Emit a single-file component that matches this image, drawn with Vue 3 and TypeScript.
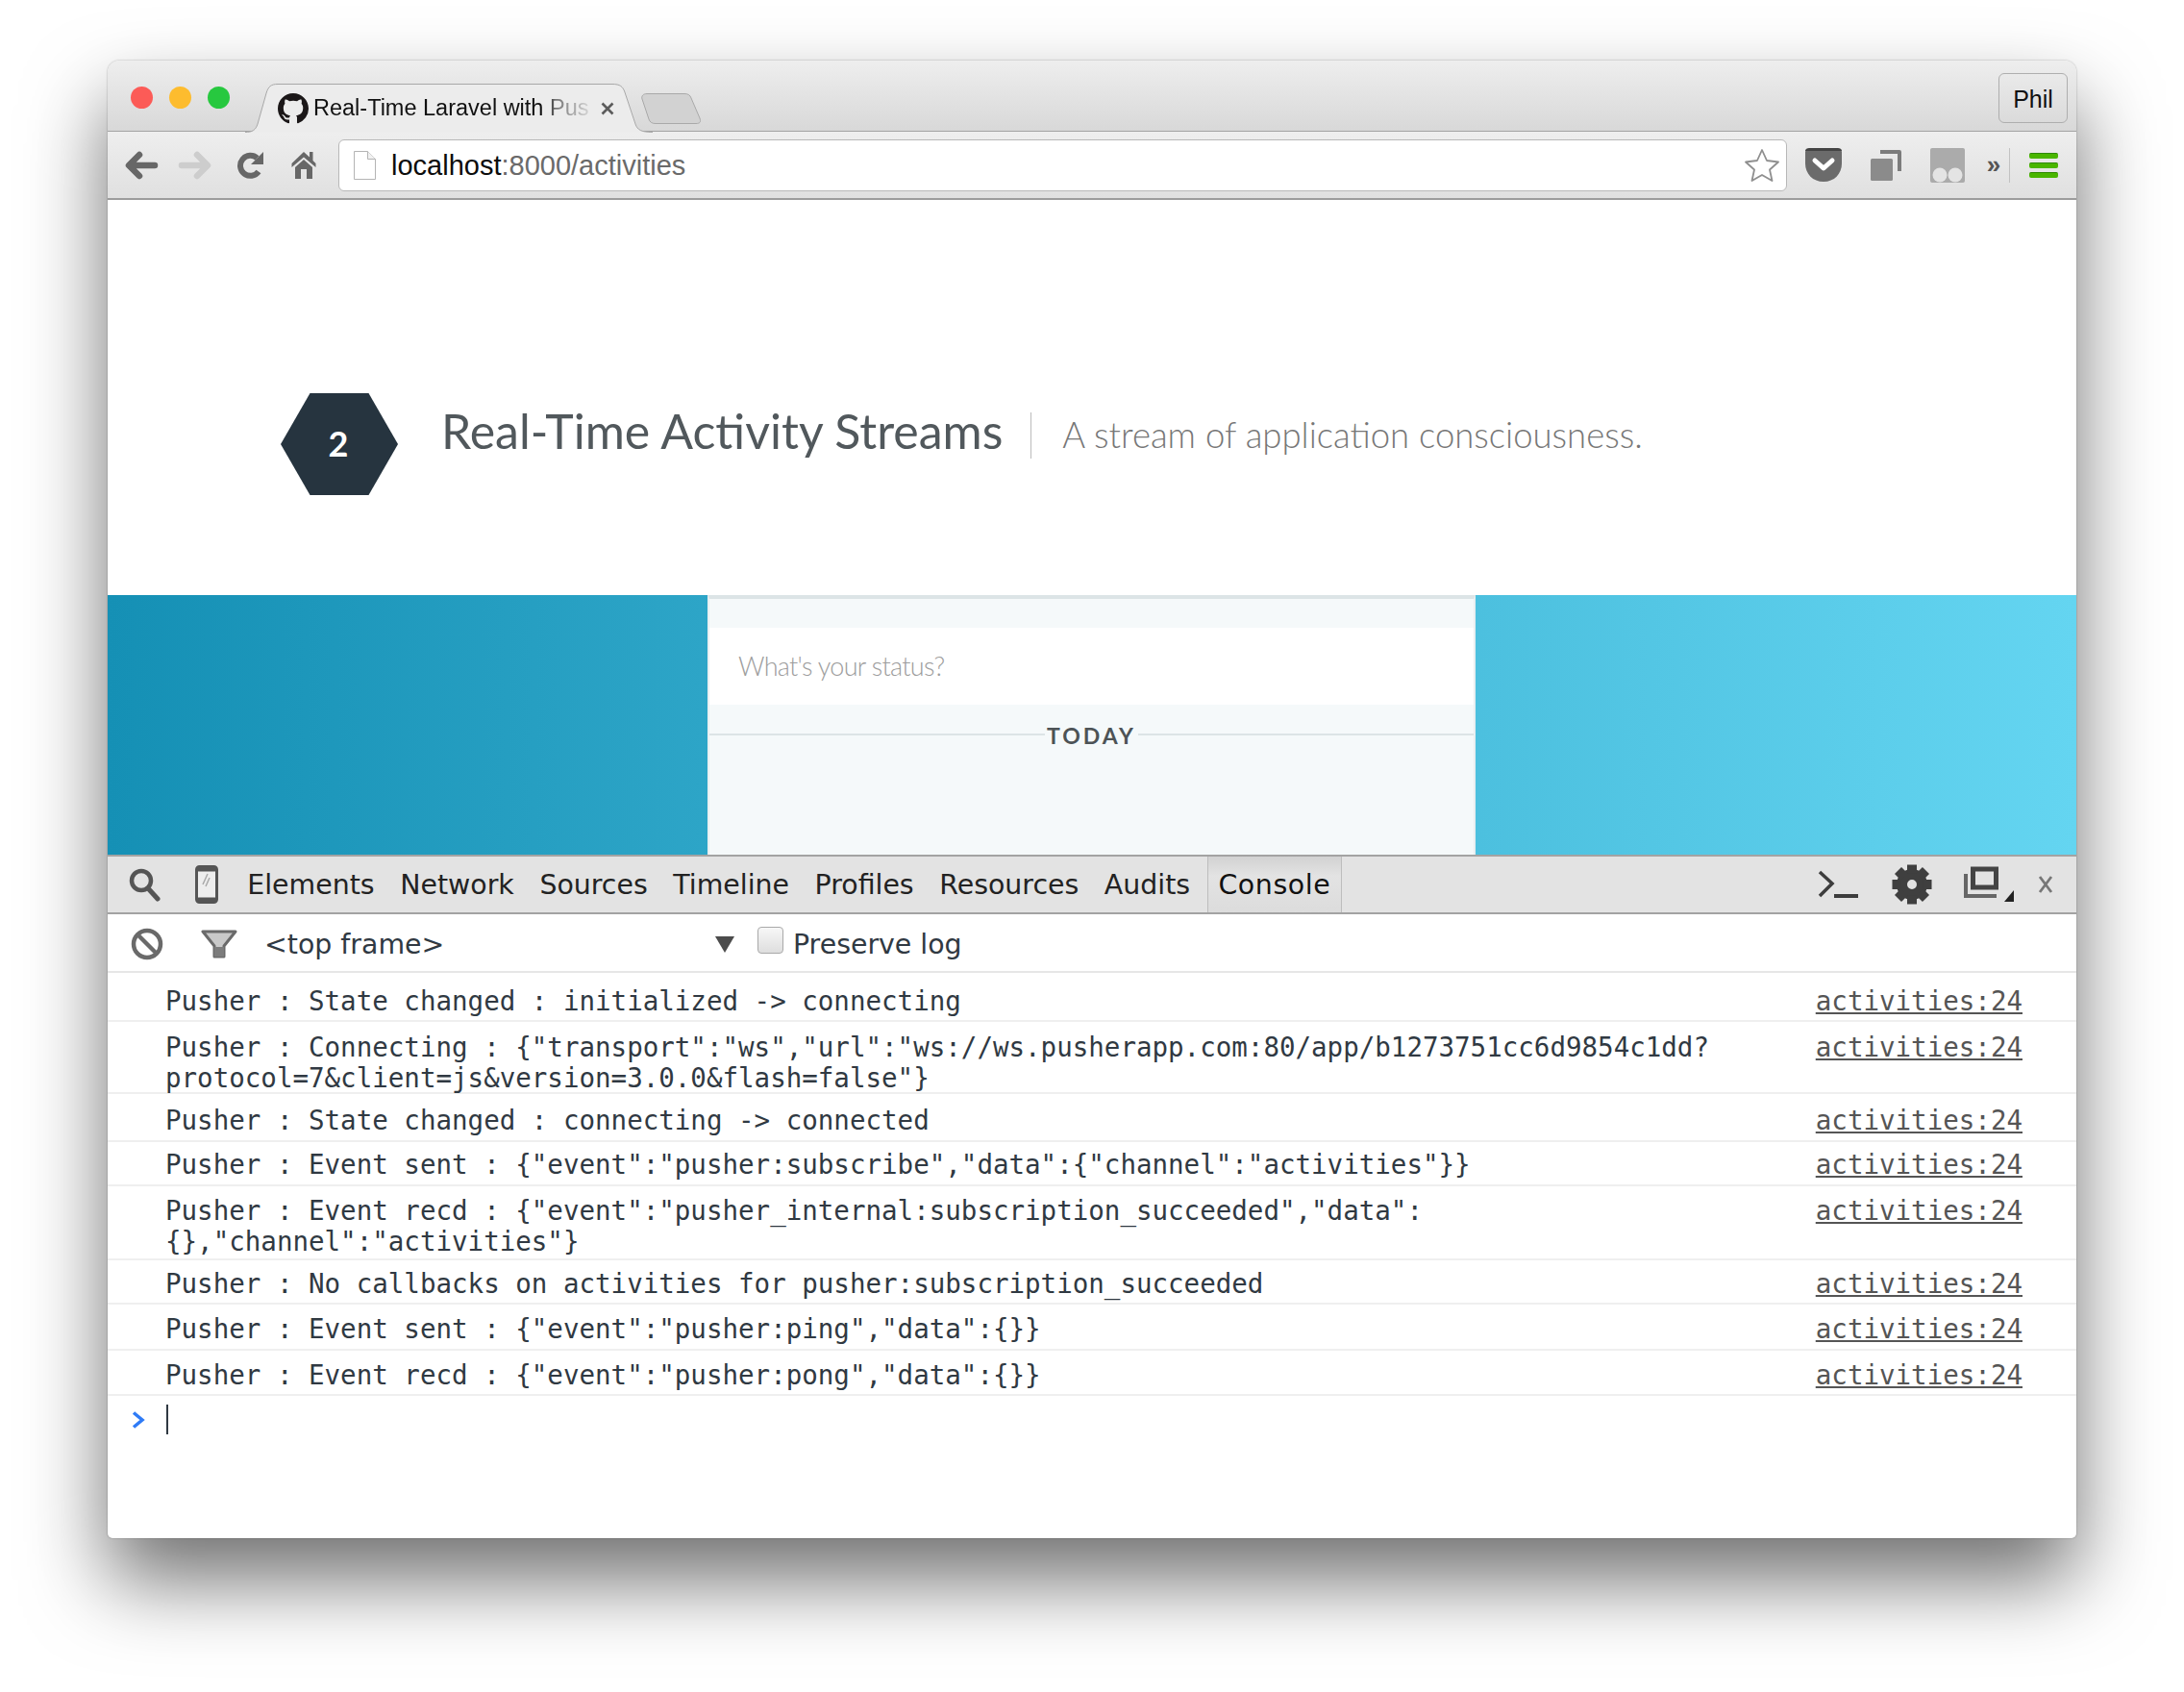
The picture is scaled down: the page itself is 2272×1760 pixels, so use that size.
<script setup lang="ts">
const tabs: string[] = ['Elements', 'Network', 'Sources', 'Timeline', 'Profiles', 'Resources', 'Audits', 'Console']
interface Row { lines: string[]; height: number; top: number }
const rows: Row[] = [
  { lines: ['Pusher : State changed : initialized -> connecting'], height: 51, top: 13 },
  { lines: ['Pusher : Connecting : {"transport":"ws","url":"ws://ws.pusherapp.com:80/app/b1273751cc6d9854c1dd?', 'protocol=7&client=js&version=3.0.0&flash=false"}'], height: 75, top: 10 },
  { lines: ['Pusher : State changed : connecting -> connected'], height: 50, top: 11 },
  { lines: ['Pusher : Event sent : {"event":"pusher:subscribe","data":{"channel":"activities"}}'], height: 46, top: 7 },
  { lines: ['Pusher : Event recd : {"event":"pusher_internal:subscription_succeeded","data":', '{},"channel":"activities"}'], height: 77, top: 9 },
  { lines: ['Pusher : No callbacks on activities for pusher:subscription_succeeded'], height: 46, top: 8 },
  { lines: ['Pusher : Event sent : {"event":"pusher:ping","data":{}}'], height: 48, top: 9 },
  { lines: ['Pusher : Event recd : {"event":"pusher:pong","data":{}}'], height: 47, top: 9 },
]
const teeth: number[] = [0, 45, 90, 135, 180, 225, 270, 315]
</script>

<template>
  <div class="screen">
    <div class="window">
      <header class="strip">
        <div class="lights">
          <span class="light red"></span>
          <span class="light amber"></span>
          <span class="light green"></span>
        </div>
        <div class="tab">
          <svg class="tab-shape" width="424" height="51" viewBox="0 0 424 51">
            <path d="M0 50.5 C8 50.5 11 48 13 42 L22 10 C24 3 27 .5 34 .5 H382 C390 .5 393 3 395 9 L406 42 C408 48 412 50.5 424 50.5" fill="#ececec" stroke="#a8a8a8" />
          </svg>
          <svg class="octo" width="32" height="32" viewBox="0 0 16 16">
            <path fill="#1b1718" d="M8 0C3.58 0 0 3.58 0 8c0 3.54 2.29 6.53 5.47 7.59.4.07.55-.17.55-.38 0-.19-.01-.82-.01-1.49-2.01.37-2.53-.49-2.69-.94-.09-.23-.48-.94-.82-1.13-.28-.15-.68-.52-.01-.53.63-.01 1.08.58 1.23.82.72 1.21 1.87.87 2.33.66.07-.52.28-.87.51-1.07-1.78-.2-3.64-.89-3.64-3.95 0-.87.31-1.59.82-2.15-.08-.2-.36-1.02.08-2.12 0 0 .67-.21 2.2.82.64-.18 1.32-.27 2-.27.68 0 1.36.09 2 .27 1.53-1.04 2.2-.82 2.2-.82.44 1.1.16 1.92.08 2.12.51.56.82 1.27.82 2.15 0 3.07-1.87 3.75-3.65 3.95.29.25.54.73.54 1.48 0 1.07-.01 1.93-.01 2.2 0 .21.15.46.55.38A8.013 8.013 0 0016 8c0-4.42-3.58-8-8-8z" />
          </svg>
          <span class="tab-title">Real-Time Laravel with Pus</span>
          <svg class="tab-close" width="14" height="14" viewBox="0 0 14 14">
            <path d="M1.5 1.5 L12.5 12.5 M12.5 1.5 L1.5 12.5" stroke="#5c5c5c" stroke-width="2.6" />
          </svg>
        </div>
        <svg class="newtab" width="64" height="32" viewBox="0 0 64 32">
          <path d="M7 .5 H46 C50 .5 52 2 53 5 L62 26 C63.5 30 62 31.5 58 31.5 H16 C12 31.5 10 30 9 27 L2 6 C1 3 3 .5 7 .5 Z" fill="#d2d2d2" stroke="#a9a9a9" />
        </svg>
        <div class="profile">Phil</div>
      </header>

      <div class="toolbar">
        <svg class="ic back" width="36" height="36" viewBox="0 0 36 36">
          <path d="M32 18 H8 M16 7 L5 18 L16 29" fill="none" stroke="#676767" stroke-width="6.5" stroke-linecap="round" stroke-linejoin="round" />
        </svg>
        <svg class="ic fwd" width="36" height="36" viewBox="0 0 36 36">
          <path d="M4 18 H28 M20 7 L31 18 L20 29" fill="none" stroke="#cdcdcd" stroke-width="6.5" stroke-linecap="round" stroke-linejoin="round" />
        </svg>
        <svg class="ic reload" width="36" height="36" viewBox="0 0 36 36">
          <path d="M24.500 10.500 A10.500 10.500 0 1 0 26 24.500" fill="none" stroke="#676767" stroke-width="6" />
          <path d="M31 4 V17 H18 Z" fill="#676767" />
        </svg>
        <svg class="ic home" width="36" height="36" viewBox="0 0 36 36">
          <path d="M18 4 L24 9.500 V4 H27.500 V13 L30.500 16 V20 L18 9.500 L5.500 20 V16 Z M9 20 L18 12 L27 20 V32 H21 V22 H15 V32 H9 Z" fill="#676767" />
        </svg>
        <div class="address">
          <svg class="page-ic" width="23" height="30" viewBox="0 0 23 30">
            <path d="M.5 .5 H14.500 L22.500 8.500 V29.500 H.5 Z" fill="#fff" stroke="#b4b4b4" />
            <path d="M14.500 .5 V8.500 H22.500" fill="#f1f1f1" stroke="#b4b4b4" />
          </svg>
          <span class="url"><span class="host">localhost</span>:8000/activities</span>
          <svg class="star" width="38" height="36" viewBox="0 0 38 36">
            <path d="M19 2 L24 13 L36 14.500 L27 22.500 L29.500 34 L19 28 L8.500 34 L11 22.500 L2 14.500 L14 13 Z" fill="#fff" stroke="#8f8f8f" stroke-width="1.800" stroke-linejoin="round" />
          </svg>
        </div>
        <svg class="ic pocket" width="38" height="36" viewBox="0 0 38 36">
          <path d="M0 4 C0 2 2 1 4 1 H34 C36 1 38 2 38 4 V16 C38 27 30 35 19 35 C8 35 0 27 0 16 Z" fill="#6b6b6b" />
          <path d="M0 3 C0 1 2 0 4 0 H34 C36 0 38 1 38 3 Z" fill="#444" />
          <path d="M10 13 L19 21 L28 13" fill="none" stroke="#fff" stroke-width="5" stroke-linecap="round" stroke-linejoin="round" />
        </svg>
        <svg class="ic copy" width="32" height="32" viewBox="0 0 32 32">
          <path d="M10 2 H30 V22" fill="none" stroke="#7c7c7c" stroke-width="4" stroke-linejoin="round" />
          <rect x="0" y="9" width="23" height="23" rx="1.500" fill="#8b8b8b" />
        </svg>
        <svg class="ic ghost" width="38" height="38" viewBox="0 0 38 38">
          <rect x="1" y="1" width="36" height="36" rx="2" fill="#ababab" />
          <circle cx="11" cy="29" r="7.500" fill="#e4e4e4" />
          <circle cx="27" cy="29" r="7.500" fill="#e4e4e4" />
        </svg>
        <span class="chevrons">»</span>
        <span class="sep"></span>
        <div class="menu">
          <span></span><span></span><span></span>
        </div>
      </div>

      <main class="page">
        <section class="hero">
          <div class="hex">2</div>
          <h1 class="title">Real-Time Activity Streams</h1>
          <span class="divider"></span>
          <p class="tagline">A stream of application consciousness.</p>
        </section>
        <section class="band">
          <div class="panel">
            <div class="status">What's your status?</div>
            <div class="today">
              <span class="rule"></span>
              <span class="today-label">TODAY</span>
              <span class="rule"></span>
            </div>
          </div>
        </section>
      </main>

      <section class="devtools">
        <nav class="dt-tabs">
          <svg class="search" width="34" height="36" viewBox="0 0 34 36">
            <circle cx="14" cy="14" r="10" fill="none" stroke="#555" stroke-width="4.500" />
            <path d="M21 22 L31 33" stroke="#555" stroke-width="5" stroke-linecap="round" />
          </svg>
          <svg class="device" width="24" height="40" viewBox="0 0 24 40">
            <rect x="1.500" y="1.500" width="21" height="37" rx="3" fill="#eee" stroke="#555" stroke-width="3" />
            <rect x="1.500" y="1.500" width="21" height="5" rx="2" fill="#555" />
            <rect x="1.500" y="33.500" width="21" height="5" rx="2" fill="#555" />
            <path d="M8 20 L13 9 M11 22 L15 13" stroke="#aaa" stroke-width="1.500" />
          </svg>
          <span v-for="t in tabs" :key="t" class="dt-tab" :class="{ active: t === 'Console' }">{{ t }}</span>
          <span class="spacer"></span>
          <svg class="drawer" width="42" height="30" viewBox="0 0 42 30">
            <path d="M2 2 L15 14 L2 27" fill="none" stroke="#3d3d3d" stroke-width="3.500" />
            <rect x="17" y="25" width="25" height="4" fill="#3d3d3d" />
          </svg>
          <svg class="gear" width="42" height="42" viewBox="-21 -21 42 42">
            <circle r="10.500" fill="none" stroke="#3f3f3f" stroke-width="11" />
            <rect v-for="a in teeth" :key="a" x="-5" y="-20.500" width="10" height="9" fill="#3f3f3f" :transform="`rotate(${a})`" />
          </svg>
          <svg class="dock" width="58" height="38" viewBox="0 0 58 38">
            <rect x="9.500" y="3" width="24" height="19" fill="none" stroke="#444" stroke-width="5" />
            <path d="M2 8 V31 H34" fill="none" stroke="#666" stroke-width="4" />
            <path d="M52 25 V37 H42 Z" fill="#222" />
          </svg>
          <svg class="dt-close" width="18" height="22" viewBox="0 0 18 22">
            <path d="M3 3 L15 19 M15 3 L3 19" stroke="#777" stroke-width="2.800" />
          </svg>
        </nav>
        <div class="filter">
          <svg class="block" width="34" height="34" viewBox="0 0 34 34">
            <circle cx="17" cy="17" r="14" fill="none" stroke="#6a6a6a" stroke-width="4.500" />
            <path d="M7 7 L27 27" stroke="#6a6a6a" stroke-width="4.500" />
          </svg>
          <svg class="funnel" width="38" height="30" viewBox="0 0 38 30">
            <path d="M2 2 H36 L24 17 V28 H14 V17 Z" fill="#c9c9c9" stroke="#6a6a6a" stroke-width="3" stroke-linejoin="round" />
            <path d="M14 18 H24 V28 H14 Z" fill="#7c7c7c" />
          </svg>
          <span class="frame">&lt;top frame&gt;</span>
          <span class="caret-down"></span>
          <span class="check"></span>
          <span class="preserve">Preserve log</span>
        </div>
        <div class="log">
          <div v-for="(r, i) in rows" :key="i" class="row" :style="{ height: r.height + 'px', paddingTop: r.top + 'px' }">
            <div class="msg">
              <div v-for="l in r.lines" :key="l" class="line">{{ l }}</div>
            </div>
            <a class="src">activities:24</a>
          </div>
        </div>
        <div class="prompt">
          <svg width="14" height="18" viewBox="0 0 14 18">
            <path d="M2 1.500 L11 9 L2 16.500" fill="none" stroke="#2f7bf6" stroke-width="3.500" />
          </svg>
          <span class="cursor"></span>
        </div>
      </section>
    </div>
  </div>
</template>

<style>
html, body { margin: 0; background: #fff; }
</style>

<style scoped>
.screen {
  width: 2272px;
  height: 1760px;
  box-sizing: border-box;
  padding: 63px 112px 0;
  background: #fff;
  overflow: hidden;
}
.window {
  width: 2048px;
  height: 1537px;
  display: flex;
  flex-direction: column;
  background: #fff;
  border-radius: 12px 12px 5px 5px;
  box-shadow: 0 44px 84px rgba(0, 0, 0, .56), 0 0 2px rgba(0, 0, 0, .35);
  overflow: hidden;
}
.strip {
  height: 74px;
  box-sizing: border-box;
  flex: none;
  display: flex;
  align-items: flex-start;
  background: linear-gradient(#eeeeee, #d8d8d8);
  border-bottom: 1px solid #a3a3a3;
}
.lights { display: flex; gap: 17px; padding: 27px 0 0 24px; }
.light { width: 23px; height: 23px; border-radius: 50%; }
.red { background: #fc5b57; }
.amber { background: #fdbc2e; }
.green { background: #27c83f; }
.tab {
  position: relative;
  width: 424px;
  height: 51px;
  margin: 24px 0 0 16px;
  display: flex;
  align-items: center;
  padding: 0 40px 0 34px;
  box-sizing: border-box;
}
.tab-shape { position: absolute; left: 0; top: 0; }
.octo { position: relative; flex: none; margin-top: 1px; }
.tab-title {
  position: relative;
  flex: none;
  margin-left: 5px;
  white-space: nowrap;
  font: 23.500px "Liberation Sans", Arial, sans-serif;
  color: #111;
  -webkit-mask-image: linear-gradient(90deg, #000 85%, rgba(0, 0, 0, .55) 88%, rgba(0, 0, 0, .12) 100%);
  mask-image: linear-gradient(90deg, #000 85%, rgba(0, 0, 0, .55) 88%, rgba(0, 0, 0, .12) 100%);
}
.tab-close { position: relative; flex: none; margin-left: auto; }
.newtab { flex: none; margin: 34px 0 0 -13px; }
.profile {
  margin: 13px 9px 0 auto;
  width: 72px;
  height: 52px;
  box-sizing: border-box;
  border: 1px solid #aeaeae;
  border-radius: 6px;
  display: flex;
  align-items: center;
  justify-content: center;
  padding-top: 2px;
  font: 25px "Liberation Sans", Arial, sans-serif;
  color: #111;
}
.toolbar {
  height: 71px;
  flex: none;
  box-sizing: border-box;
  display: flex;
  align-items: center;
  background: linear-gradient(#eeeeee, #e0e0e0);
  border-bottom: 2px solid #9c9c9c;
}
.ic { flex: none; }
.back { margin-left: 17px; }
.fwd { margin-left: 20px; }
.reload { margin-left: 22px; }
.home { margin-left: 19px; }
.address {
  flex: none;
  width: 1507px;
  height: 54px;
  margin: 1px 0 0 18px;
  box-sizing: border-box;
  display: flex;
  align-items: center;
  padding-left: 15px;
  background: #fff;
  border: 1px solid #b8b8b8;
  border-radius: 6px;
}
.page-ic { flex: none; }
.url {
  margin-left: 16px;
  font: 29px "Liberation Sans", Arial, sans-serif;
  color: #6a6a6a;
}
.host { color: #0c0c0c; }
.star { margin-left: auto; margin-right: 6px; }
.pocket { margin-left: 19px; }
.copy { margin-left: 30px; }
.ghost { margin-left: 29px; filter: blur(.6px); }
.chevrons {
  width: 24px;
  margin-left: 17px;
  margin-right: 3px;
  text-align: center;
  font: bold 26px "Liberation Sans", Arial, sans-serif;
  color: #555;
}
.sep { width: 1px; height: 36px; margin-left: 1px; background: #c2c2c2; }
.menu { margin-left: 20px; display: flex; flex-direction: column; gap: 4px; }
.menu span {
  width: 30px;
  height: 6px;
  border-radius: 2px;
  background: #4ab500;
  border-top: 1px solid #2f8a00;
  box-sizing: border-box;
}
.page { height: 681px; flex: none; display: flex; flex-direction: column; }
.hero {
  height: 411px;
  flex: none;
  box-sizing: border-box;
  padding: 201px 0 0 180px;
  display: flex;
  align-items: flex-start;
}
.hex {
  width: 122px;
  height: 106px;
  flex: none;
  box-sizing: border-box;
  padding: 0 2px 3px 0;
  display: flex;
  align-items: center;
  justify-content: center;
  clip-path: polygon(25% 0, 75% 0, 100% 50%, 75% 100%, 25% 100%, 0 50%);
  background: #26343f;
  color: #fff;
  font: 700 36px Lato, sans-serif;
}
.title {
  margin: 9px 0 0 45px;
  font: 400 50px/60px Lato, sans-serif;
  color: #51585c;
  white-space: nowrap;
}
.divider { width: 1px; height: 48px; margin: 20px 0 0 29px; background: #bbb; flex: none; }
.tagline {
  margin: 18px 0 0 32px;
  font: 300 36.500px/50px Lato, sans-serif;
  color: #777;
  white-space: nowrap;
}
.band {
  flex: 1;
  padding-left: 624px;
  background: linear-gradient(90deg, #1590b5, #64d5f1);
}
.panel {
  width: 799px;
  height: 100%;
  box-sizing: border-box;
  padding-top: 30px;
  background: #f5f9fa;
  border-top: 4px solid #dce4e6;
  border-left: 2px solid #e9eff1;
  border-right: 2px solid #e9eff1;
}
.status {
  height: 80px;
  box-sizing: border-box;
  padding: 0 0 2px 30px;
  display: flex;
  align-items: center;
  background: #fff;
  font: 300 27px Lato, sans-serif;
  letter-spacing: -.7px;
  color: #9d9d9d;
}
.today { margin-top: 30px; display: flex; align-items: flex-start; }
.rule { flex: 1; height: 2px; background: #dce4e6; }
.today-label {
  margin-top: -14px;
  padding: 0 2px;
  font: 700 23px/32px Lato, sans-serif;
  letter-spacing: 3px;
  color: #4d5356;
}
.devtools { flex: 1; display: flex; flex-direction: column; min-height: 0; }
.dt-tabs {
  height: 62px;
  flex: none;
  box-sizing: border-box;
  display: flex;
  align-items: center;
  background: #e3e3e3;
  border-top: 2px solid #a3a3a3;
  border-bottom: 2px solid #a3a3a3;
}
.search { flex: none; margin-left: 21px; }
.device { flex: none; margin-left: 36px; }
.dt-tab {
  height: 58px;
  display: flex;
  align-items: center;
  padding: 0 13.300px;
  font: 28.400px "DejaVu Sans", sans-serif;
  color: #222;
}
.dt-tab:first-of-type { margin-left: 17px; }
.dt-tab.active {
  margin-left: 5px;
  padding: 0 11px 0 10px;
  letter-spacing: .6px;
  color: #111;
  background: linear-gradient(#d2d2d2, #e3e3e3 35%, #dcdcdc 100%);
  border-left: 1px solid #bdbdbd;
  border-right: 1px solid #bdbdbd;
}
.spacer { flex: 1; }
.drawer { flex: none; }
.gear { flex: none; margin-left: 35px; }
.dock { flex: none; margin-left: 33px; }
.dt-close { flex: none; margin: 0 23px 0 18px; }
.filter {
  height: 61px;
  flex: none;
  box-sizing: border-box;
  padding-top: 3px;
  display: flex;
  align-items: center;
  border-bottom: 2px solid #e6e6e6;
  font: 28.400px "DejaVu Sans", sans-serif;
  color: #303942;
}
.block { flex: none; margin-left: 24px; }
.funnel { flex: none; margin-left: 39px; }
.frame { width: 469px; margin-left: 28px; }
.caret-down {
  width: 0;
  height: 0;
  border-left: 10px solid transparent;
  border-right: 10px solid transparent;
  border-top: 17px solid #4c4c4c;
}
.check {
  width: 27px;
  height: 28px;
  margin: -8px 0 0 24px;
  box-sizing: border-box;
  border: 1px solid #a9a9a9;
  border-radius: 4px;
  background: linear-gradient(#f7f7f7, #dedede);
}
.preserve { margin-left: 10px; }
.log { flex: none; }
.row {
  box-sizing: border-box;
  display: flex;
  justify-content: space-between;
  padding: 0 56px 0 60px;
  border-bottom: 2px solid #efefef;
  font: 27.500px/32px "DejaVu Sans Mono", monospace;
  color: #303942;
}
.line { white-space: pre; }
.src { color: #555; text-decoration: underline; }
.prompt { display: flex; align-items: center; height: 31px; margin-top: 9px; padding-left: 25px; }
.cursor { width: 2px; height: 31px; margin-left: 22px; background: #303942; }
</style>
